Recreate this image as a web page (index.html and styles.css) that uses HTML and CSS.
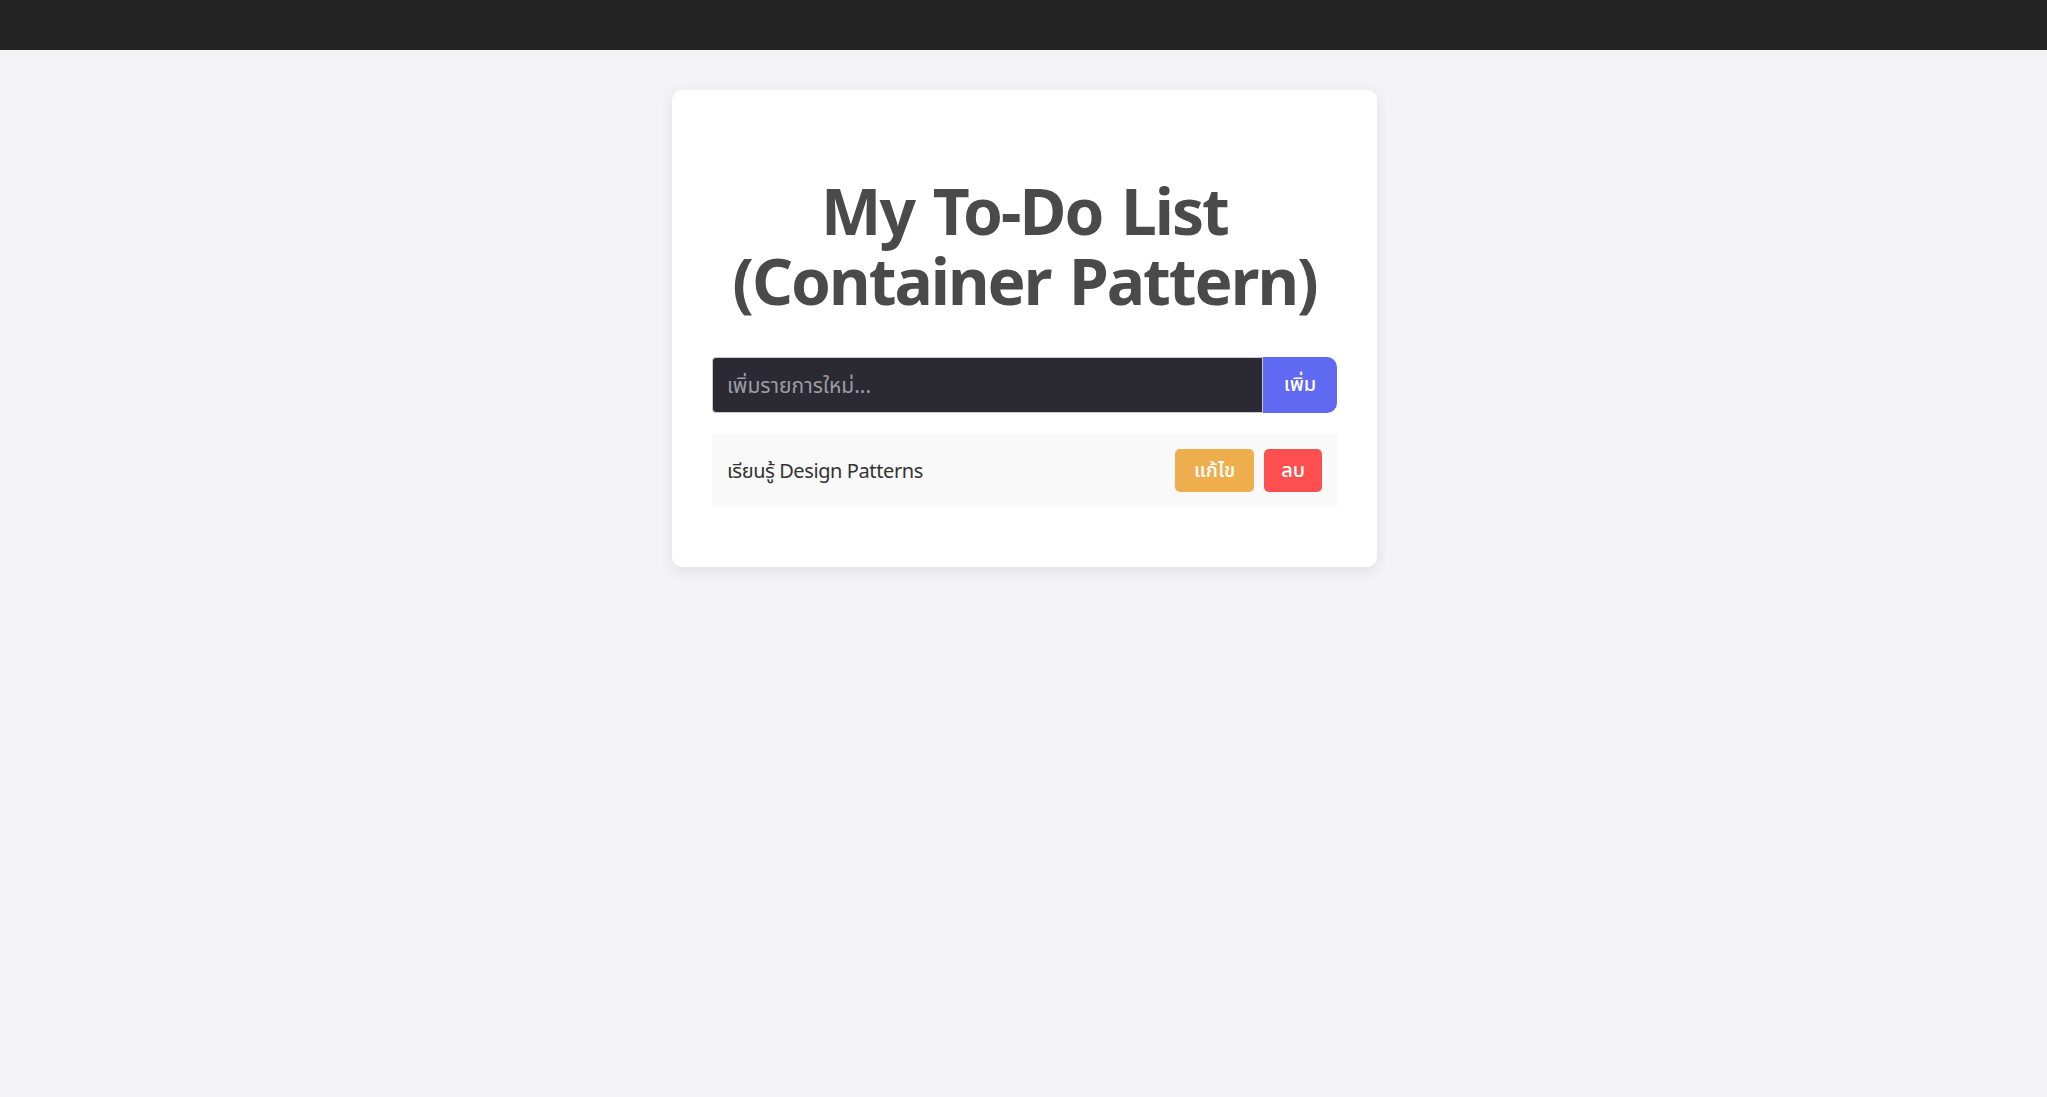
FILE: index.html
```html
<!DOCTYPE html>
<html lang="th">
<head>
<meta charset="utf-8">
<title>My To-Do List</title>
<link rel="stylesheet" href="styles.css">
</head>
<body>
<div class="topbar"></div>
<main class="page">
  <section class="card">
    <h1 class="title">My To-Do List (Container Pattern)</h1>
    <form class="add-form" onsubmit="return false">
      <input class="add-input" type="text" placeholder="เพิ่มรายการใหม่...">
      <button class="add-btn" type="button">เพิ่ม</button>
    </form>
    <ul class="todo-list">
      <li class="todo-item">
        <span class="todo-text">เรียนรู้ Design Patterns</span>
        <div class="todo-actions">
          <button class="btn btn-edit" type="button">แก้ไข</button>
          <button class="btn btn-delete" type="button">ลบ</button>
        </div>
      </li>
    </ul>
  </section>
</main>
</body>
</html>
```
FILE: styles.css
```css
html, body {
  margin: 0;
  padding: 0;
}
body {
  background: #f3f3f7;
  font-family: "Noto Sans", "Open Sans", "Noto Sans Thai", "Leelawadee UI", sans-serif;
  min-height: 100vh;
}
.topbar {
  height: 50px;
  background: #242424;
}
.page {
  display: flex;
  justify-content: center;
  padding-top: 40px;
  padding-left: 2px;
}
.card {
  width: 705px;
  box-sizing: border-box;
  padding: 40px;
  background: #ffffff;
  border-radius: 10px;
  box-shadow: 0 4px 14px rgba(0, 0, 0, 0.08);
}
.title {
  margin: 43px 0 40px;
  padding-top: 3px;
  font-size: 64px;
  line-height: 70.4px;
  font-weight: 700;
  letter-spacing: -2px;
  word-spacing: 4px;
  color: #4a4a4a;
  text-align: center;
}
.add-form {
  display: flex;
  height: 56px;
}
.add-input {
  flex: 1;
  min-width: 0;
  box-sizing: border-box;
  height: 56px;
  margin: 0;
  padding: 0 14px;
  background: #2b2a33;
  border: 1.5px solid #c9c9ce;
  border-right: 1px solid #c9c9ce;
  border-radius: 4px 0 0 4px;
  color: #fbfbfe;
  font-family: inherit;
  font-size: 21px;
  outline: none;
}
.add-input::placeholder {
  color: #9d9ca4;
  opacity: 1;
}
.add-btn {
  width: 74px;
  height: 56px;
  margin: 0;
  padding: 0;
  border: none;
  border-radius: 0 10px 10px 0;
  background: #5f69f1;
  color: #ffffff;
  font-family: inherit;
  font-size: 20px;
  font-weight: 500;
  cursor: pointer;
}
.todo-list {
  list-style: none;
  margin: 21px 0 20px;
  padding: 0;
}
.todo-item {
  display: flex;
  align-items: center;
  justify-content: space-between;
  padding: 15px 15px 15px 15px;
  background: #f9f9f9;
}
.todo-text {
  font-size: 20px;
  letter-spacing: -0.4px;
  color: #333333;
  padding-top: 3px;
}
.todo-actions {
  display: flex;
  gap: 10px;
}
.btn {
  height: 43px;
  padding: 2px 17px 0;
  border: none;
  border-radius: 5px;
  color: #ffffff;
  font-family: inherit;
  font-size: 20px;
  font-weight: 500;
  cursor: pointer;
}
.btn-edit {
  background: #eeae4e;
  padding-left: 19px;
  padding-right: 19px;
}
.btn-delete {
  background: #fe4f50;
}
```
